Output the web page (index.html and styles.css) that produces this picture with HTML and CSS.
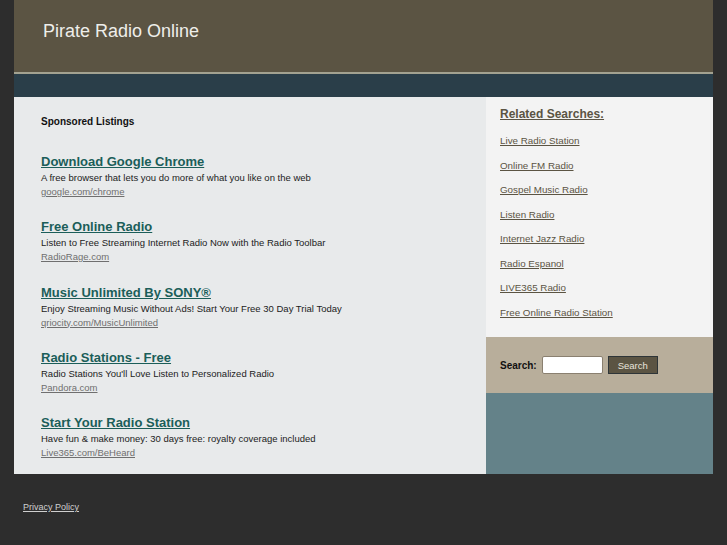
FILE: index.html
```html
<!DOCTYPE html>
<html>
<head>
<meta charset="utf-8">
<title>Pirate Radio Online</title>
<link rel="stylesheet" href="styles.css">
</head>
<body>
<div class="wrap">
  <div class="header"><h1 class="title">Pirate Radio Online</h1></div>
  <div class="nav"></div>
  <div class="main">
    <div class="content">
      <h2 class="sponsored">Sponsored Listings</h2>
      <div class="ad">
        <a class="ad-title" href="#">Download Google Chrome</a>
        <p class="ad-desc">A free browser that lets you do more of what you like on the web</p>
        <a class="ad-url" href="#">google.com/chrome</a>
      </div>
      <div class="ad">
        <a class="ad-title" href="#">Free Online Radio</a>
        <p class="ad-desc">Listen to Free Streaming Internet Radio Now with the Radio Toolbar</p>
        <a class="ad-url" href="#">RadioRage.com</a>
      </div>
      <div class="ad">
        <a class="ad-title" href="#">Music Unlimited By SONY®</a>
        <p class="ad-desc">Enjoy Streaming Music Without Ads! Start Your Free 30 Day Trial Today</p>
        <a class="ad-url" href="#">qriocity.com/MusicUnlimited</a>
      </div>
      <div class="ad">
        <a class="ad-title" href="#">Radio Stations - Free</a>
        <p class="ad-desc">Radio Stations You'll Love Listen to Personalized Radio</p>
        <a class="ad-url" href="#">Pandora.com</a>
      </div>
      <div class="ad">
        <a class="ad-title" href="#">Start Your Radio Station</a>
        <p class="ad-desc">Have fun &amp; make money: 30 days free: royalty coverage included</p>
        <a class="ad-url" href="#">Live365.com/BeHeard</a>
      </div>
    </div>
    <div class="sidebar">
      <div class="related">
        <h3 class="related-title">Related Searches:</h3>
        <ul class="related-list">
          <li><a href="#">Live Radio Station</a></li>
          <li><a href="#">Online FM Radio</a></li>
          <li><a href="#">Gospel Music Radio</a></li>
          <li><a href="#">Listen Radio</a></li>
          <li><a href="#">Internet Jazz Radio</a></li>
          <li><a href="#">Radio Espanol</a></li>
          <li><a href="#">LIVE365 Radio</a></li>
          <li><a href="#">Free Online Radio Station</a></li>
        </ul>
      </div>
      <form class="search">
        <label class="search-label">Search:</label>
        <input class="search-input" type="text">
        <button class="search-btn" type="button">Search</button>
      </form>
      <div class="teal"></div>
    </div>
  </div>
</div>
<div class="footer"><a href="#">Privacy Policy</a></div>
</body>
</html>
```
FILE: styles.css
```css
html, body { margin: 0; padding: 0; }
body {
  background: #2d2d2d;
  font-family: "Liberation Sans", Arial, sans-serif;
}
.wrap {
  width: 699px;
  margin: 0 auto;
}
.header {
  background: #5b5443;
  border-bottom: 2px solid #a3a291;
  box-sizing: border-box;
  height: 74px;
  padding: 20px 0 0 29px;
}
.title {
  margin: 0;
  font-weight: normal;
  font-size: 18px;
  line-height: 22px;
  color: #eeeeea;
}
.nav {
  background: #2a3e49;
  height: 23px;
}
.main {
  display: flex;
  height: 377px;
}
.content {
  width: 472px;
  background: #e8eaeb;
  box-sizing: border-box;
  padding: 18px 0 0 27px;
}
.sponsored {
  margin: 0 0 25px;
  font-size: 10px;
  line-height: 13px;
  font-weight: bold;
  color: #111;
}
.ad {
  height: 65.3px;
}
.ad-title {
  display: block;
  font-size: 13px;
  line-height: 17px;
  font-weight: bold;
  color: #1b5e59;
}
.ad-desc {
  margin: 1px 0 0;
  font-size: 9.5px;
  line-height: 14px;
  color: #222;
}
.ad-url {
  display: block;
  font-size: 9.5px;
  line-height: 14px;
  color: #6f6f6f;
}
.sidebar {
  width: 227px;
  display: flex;
  flex-direction: column;
}
.related {
  background: #f3f3f3;
  height: 240px;
  box-sizing: border-box;
  padding: 10px 0 0 14px;
}
.related-title {
  margin: 0 0 12px;
  font-size: 12px;
  line-height: 15px;
  font-weight: bold;
  color: #5b5443;
  text-decoration: underline;
}
.related-list {
  list-style: none;
  margin: 0;
  padding: 0;
}
.related-list li {
  height: 24.5px;
  font-size: 9.8px;
  line-height: 13px;
}
.related-list a { color: #5b5443; }
.search {
  margin: 0;
  background: #b8ae9b;
  height: 56px;
  display: flex;
  align-items: center;
  padding-left: 14px;
  box-sizing: border-box;
}
.search-label {
  font-size: 10px;
  font-weight: bold;
  color: #111;
  margin-right: 5px;
}
.search-input {
  width: 61px;
  height: 18px;
  box-sizing: border-box;
  border: 1px solid #8a8070;
  border-radius: 2px;
  background: #fff;
  padding: 0;
  margin: 0 5px 0 0;
}
.search-btn {
  width: 50px;
  height: 18px;
  box-sizing: border-box;
  background: #5b5443;
  border: 1px solid #2e3538;
  color: #e8e4dc;
  font-family: "Liberation Sans", Arial, sans-serif;
  font-size: 9.5px;
  padding: 0;
}
.teal {
  flex: 1;
  background: #648289;
}
.footer {
  padding: 27px 0 0 23px;
  font-size: 9px;
  line-height: 12px;
}
.footer a { color: #cfcfcf; }
```
